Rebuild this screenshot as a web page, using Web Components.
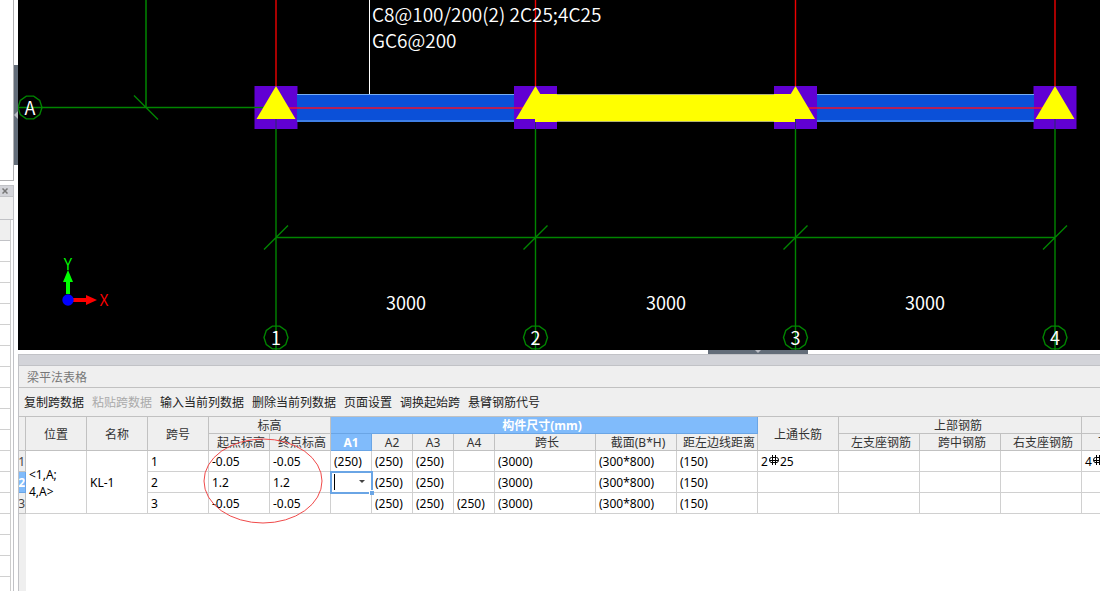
<!DOCTYPE html>
<html lang="zh-CN">
<head>
<meta charset="utf-8">
<title>梁平法表格</title>
<style>
html, body { margin: 0; height: 100%; }
body { font: 12px/16px "Noto Sans", "Noto Sans CJK SC", sans-serif; color: #000; background: #fff; overflow: hidden; }
</style>
</head>
<body>
<beam-app></beam-app>

<script>
class BaseElement extends HTMLElement {
  render(html) {
    const t = document.createElement('template');
    t.innerHTML = html;
    this.attachShadow({ mode: 'open' }).append(t.content.cloneNode(true));
  }
}

class SideDock extends BaseElement {
  constructor() {
    super();
    this.render(`
<style>
:host { display: flex; flex-direction: column; overflow: hidden; background: #fff; }
.top { display: grid; grid-template-columns: 1fr 4px; height: 181px; flex: none; }
.pane { border: solid #b1b1b3; border-width: 0 1px 1px 0; }
.grip { margin-top: 65px; height: 100px; background: #636d79; display: flex; align-items: center; }
.grip svg { display: block; }
.bottom { flex: 1; margin: 4px 4px 0 0; border-right: 1px solid #c1c2c6; display: flex; flex-direction: column; min-height: 0; }
.bar { height: 10px; border: solid #c1c2c6; border-width: 1px 0; background: #d3d4d9; display: flex; justify-content: center; align-items: center; }
button { all: unset; display: flex; margin-right: 4px; }
.tools { height: 22px; background: #efefef; border-bottom: 1px solid #c1c2c6; }
.rows { flex: 1; margin-right: 2px; border-right: 1px solid #ccc;
  background: repeating-linear-gradient(#fff 0 20px, #d0d0d0 20px 21px); }
.rows::before { content: ""; display: block; height: 20px; background: #efefef; border-bottom: 1px solid #c1c2c6; }
</style>
<div class="top"><div class="pane"></div><div class="grip"><svg width="4" height="8"><path d="M4 0L0 4L4 8Z" fill="#b9bcc4"/></svg></div></div>
<div class="bottom">
  <div class="bar"><button aria-label="关闭"><svg width="6" height="6"><path d="M.5 .5L5.500 5.500M5.500 .5L.5 5.500" stroke="#777" stroke-width="1.500"/></svg></button></div>
  <div class="tools"></div>
  <div class="rows"></div>
</div>`);
  }
}

class DrawingView extends BaseElement {
  constructor() {
    super();
    const axes = [276, 535.5, 795.5, 1055];
    const poly = (x, y, r = 12) => Array.from({ length: 10 }, (_, i) => {
      const a = Math.PI * i / 5;
      return `${(x + r * Math.cos(a)).toFixed(1)},${(y + r * Math.sin(a)).toFixed(1)}`;
    }).join(' ');
    this.render(`
<style>
:host { display: block; background: #000; overflow: hidden; }
svg { display: block; width: 100%; height: 100%; }
text { font: 18px "Noto Sans CJK SC", sans-serif; fill: #fff; }
.label { font-size: 19px; font-weight: 350; }
.mid { text-anchor: middle; }
.axis { font: 350 16px "Noto Sans CJK SC", sans-serif; text-anchor: middle; }
.g { stroke: #008400; stroke-width: 1.4; fill: none; }
.r { stroke: #ee0000; stroke-width: 1.4; fill: none; }
</style>
<svg>
  <g transform="translate(-18 0)">
    <path class="g" d="M146 0V107" style="stroke:#006400;stroke-width:2"/>
    <path class="g" d="M18 107.500H276M134 95.500L158 119.500"/>
    <path class="g" d="M276 237.500H1055"/>
    <path d="M369.500 0V95" stroke="#fff"/>
    ${axes.map(x => `<path class="r" d="M${x} 0V108"/><path class="g" d="M${x} 120V350M${x - 12} 249.500L${x + 12} 225.500"/>`).join('')}
    ${axes.map(x => `<rect x="${x - 21.5}" y="86" width="43" height="43" fill="#6100d3"/>`).join('')}
    ${axes.map(x => `<path d="M${x} 119V129.500" stroke="#2b2d6a"/>`).join('')}
    <path class="g" d="M254 107.500H276"/>
    ${[[297, 514], [817, 1034]].map(([a, b]) => `<rect x="${a}" y="94" width="${b - a}" height="28" fill="#0b50d8"/><path d="M${a} 94.500H${b}M${a} 121H${b}" stroke="#75adf5"/>`).join('')}
    <path class="r" d="M276 108H1055" style="stroke:#f0102d"/>
    <rect x="535" y="94" width="260" height="28" fill="#ff0"/>
    <path d="M557 94.500H774M557 121.500H774" stroke="#b3b375"/>
    ${axes.map(x => `<path d="M${x} 86L${x + 19.5} 119H${x - 19.5}Z" fill="#ff0"/>`).join('')}
    <polygon class="g" points="${poly(30, 107.5)}"/>
    <text class="mid" x="30" y="115">A</text>
    ${axes.map((x, i) => `<polygon class="g" points="${poly(x, 337.5)}"/><text class="mid" x="${x}" y="345">${i + 1}</text>`).join('')}
    <text class="label" x="372" y="22">C8@100/200(2) 2C25;4C25</text>
    <text class="label" x="372" y="48">GC6@200</text>
    ${[406, 666, 925].map(x => `<text class="mid" x="${x}" y="310">3000</text>`).join('')}
    <path d="M68 294V281" stroke="#0f0" stroke-width="4"/><path d="M68 270L73 282H63Z" fill="#0f0"/>
    <path d="M73 300H87" stroke="#f00" stroke-width="4"/><path d="M97 300L86 295V305Z" fill="#f00"/>
    <circle cx="68" cy="300" r="5.700" fill="#00f"/>
    <text class="axis" x="68" y="270" style="fill:#0f0">Y</text>
    <text class="axis" x="104" y="306" style="fill:#f00">X</text>
  </g>
</svg>`);
  }
}

class SplitHandle extends BaseElement {
  constructor() {
    super();
    this.render(`
<style>
:host { display: flex; justify-content: flex-end; height: 4px; background: #fff; }
div { width: 100px; margin-right: 292px; background: #636d79; display: flex; justify-content: center; }
</style>
<div><svg width="8" height="4"><path d="M1 0H7L4 3Z" fill="#b9bcc4"/></svg></div>`);
  }
}

class ToolBar extends BaseElement {
  constructor() {
    super();
    const items = ['复制跨数据', '粘贴跨数据', '输入当前列数据', '删除当前列数据', '页面设置', '调换起始跨', '悬臂钢筋代号'];
    this.render(`
<style>
:host { display: flex; align-items: center; gap: 8px; height: 26px; padding: 2px 0 0 5px; background: #efefef; border-bottom: 1px solid #c1c1c1; }
button { font: inherit; color: #222; border: 0; padding: 0; margin: 0; background: none; white-space: nowrap; }
button:disabled { color: #aaa; }
</style>
${items.map((t, i) => `<button${i === 1 ? ' disabled' : ''}>${t}</button>`).join('')}`);
  }
}

class RebarMark extends BaseElement {
  constructor() {
    super();
    this.render(`
<style>:host { display: inline-block; width: 12px; height: 10px; vertical-align: 1px; } svg { display: block; }</style>
<svg width="12" height="10"><path d="M4.500 0V10M7.500 0V10M3.500 2.500H8.500M3 7.500H9M3.500 2.500Q1.500 2.500 1.500 5T3.500 7.500M8.500 2.500Q10.500 2.500 10.500 5T8.500 7.500M2 5.500H10" stroke="#000" fill="none"/></svg>`);
  }
}

class BeamTable extends BaseElement {
  constructor() {
    super();
    const widths = [7, 61, 61, 61, 61, 61, 41, 41, 41, 41, 101, 81, 81, 81, 81, 81, 81, 81];
    const data = [
      ['1', '-0.05', '-0.05', '(250)', '(250)', '(250)', '', '(3000)', '(300*800)', '(150)', '2<rebar-mark></rebar-mark>25', '', '', '', '4<rebar-mark></rebar-mark>'],
      ['2', '1.2', '1.2', null, '(250)', '(250)', '', '(3000)', '(300*800)', '(150)', '', '', '', '', ''],
      ['3', '-0.05', '-0.05', '', '(250)', '(250)', '(250)', '(3000)', '(300*800)', '(150)', '', '', '', '', '']
    ];
    const editor = `<td class="edit"><input type="text" aria-label="A1"><svg width="6" height="4"><path d="M0 0H6L3 3Z" fill="#444"/></svg><i></i></td>`;
    this.render(`
<style>
:host { display: block; position: relative; overflow: hidden; background: linear-gradient(90deg, #efefef 7px, #fff 7px); }
table { border-collapse: separate; border-spacing: 0; table-layout: fixed; width: ${widths.reduce((a, b) => a + b)}px; }
th, td { box-sizing: border-box; padding: 0; border: solid #d0d0d0; border-width: 0 1px 1px 0; white-space: nowrap; overflow: hidden; }
th { background: #efefef; border-color: #c1c1c1; font-weight: 400; color: #333; height: 17px; padding-top: 2px; line-height: 14px; }
thead tr + tr th { padding-left: 4px; }
thead tr + tr .a { padding-left: 0; }
thead .wide { padding-right: 4px; }
td { background: #fff; height: 21px; padding: 2px 0 0 3px; line-height: 16px; }
tbody th { color: #444; direction: rtl; height: 21px; }
.on, tbody .on { background: #80bbfb; color: #fff; font-weight: 700; border-color: #6aa5e5; }
.pos { line-height: 17px; }
.edit { position: relative; overflow: visible; padding-top: 0; outline: 2px solid #6aa5e5; outline-offset: -1px; }
.edit input { display: block; box-sizing: border-box; width: 26px; height: 16px; border: 0; border-left: 1px solid #000; padding: 0; font: inherit; outline: 0; }
.edit svg { position: absolute; right: 6px; top: 8px; }
.edit i { position: absolute; right: -3px; bottom: -3px; width: 4px; height: 4px; background: #6aa5e5; border: solid #fff; border-width: 1px 0 0 1px; }
.ring { position: absolute; left: 183px; top: 20px; pointer-events: none; }
</style>
<table>
  <colgroup>${widths.map(w => `<col style="width:${w}px">`).join('')}</colgroup>
  <thead>
    <tr><th rowspan="2"></th><th rowspan="2">位置</th><th rowspan="2">名称</th><th rowspan="2">跨号</th><th colspan="2">标高</th><th colspan="7" class="on wide">构件尺寸(mm)</th><th rowspan="2">上通长筋</th><th colspan="3" class="wide">上部钢筋</th><th></th></tr>
    <tr><th>起点标高</th><th>终点标高</th><th class="on a">A1</th><th class="a">A2</th><th class="a">A3</th><th class="a">A4</th><th>跨长</th><th>截面(B*H)</th><th>距左边线距离</th><th>左支座钢筋</th><th>跨中钢筋</th><th>右支座钢筋</th><th class="a">下通长筋</th></tr>
  </thead>
  <tbody>
    ${data.map((r, n) => `<tr><th${n === 1 ? ' class="on"' : ''}>${n + 1}</th>${n ? '' : '<td rowspan="3" class="pos">&lt;1,A;<br>4,A&gt;</td><td rowspan="3">KL-1</td>'}${r.map(c => c === null ? editor : `<td>${c}</td>`).join('')}</tr>`).join('')}
  </tbody>
</table>
<svg class="ring" width="122" height="88"><ellipse cx="61" cy="44" rx="59" ry="42" fill="none" stroke="#f04a4a"/></svg>`);
  }
}

class TablePanel extends BaseElement {
  constructor() {
    super();
    this.render(`
<style>
:host { display: flex; flex-direction: column; border-left: 1px solid #c1c2c6; }
.bar { height: 10px; background: #d3d4d9; border: solid #c1c2c6; border-width: 1px 0; }
h2 { margin: 0; padding: 2px 0 0 8px; font: inherit; line-height: 19px; color: #777; background: #efefef; border-bottom: 1px solid #c1c1c1; }
beam-table { flex: 1; }
</style>
<div class="bar"></div>
<h2><slot></slot></h2>
<tool-bar></tool-bar>
<beam-table></beam-table>`);
  }
}

class BeamApp extends BaseElement {
  constructor() {
    super();
    this.render(`
<style>
:host { display: grid; grid-template-columns: 18px 1fr; height: 100vh; }
main { display: flex; flex-direction: column; min-width: 0; }
drawing-view { flex: 1; min-height: 0; }
table-panel { height: 237px; }
</style>
<side-dock></side-dock>
<main>
  <drawing-view></drawing-view>
  <split-handle></split-handle>
  <table-panel>梁平法表格</table-panel>
</main>`);
  }
}

customElements.define('side-dock', SideDock);
customElements.define('drawing-view', DrawingView);
customElements.define('split-handle', SplitHandle);
customElements.define('tool-bar', ToolBar);
customElements.define('rebar-mark', RebarMark);
customElements.define('beam-table', BeamTable);
customElements.define('table-panel', TablePanel);
customElements.define('beam-app', BeamApp);
</script>
</body>
</html>
